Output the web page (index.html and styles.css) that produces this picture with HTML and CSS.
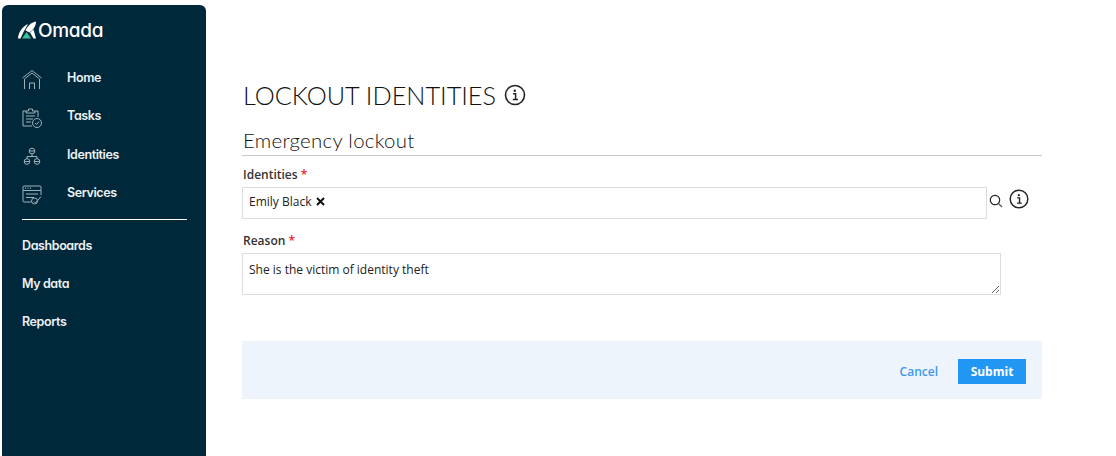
FILE: index.html
```html
<!DOCTYPE html>
<html lang="en">
<head>
    <meta charset="UTF-8">
    <meta name="viewport" content="width=device-width, initial-scale=1.0">
    <title>Lockout identities</title>
    <link rel="stylesheet" href="styles.css">
</head>
<body>
    <nav class="sidebar">
        <div class="logo">
            <svg class="logo-mark" width="20" height="18" viewBox="0 0 20 18">
                <path d="M1 17.5 C1.5 11 5.5 5.5 11 3 L6.5 11 L3.5 17.5 Z" fill="#fff"/>
                <path d="M8.5 9.5 C10.5 5 14 1.5 19 0.5 C19 5 16.5 8.5 12.5 11.5 Z" fill="#fff"/>
                <path d="M5 17.5 L9.5 11 L14 17.5 Z" fill="#3fc1a0"/>
                <path d="M13 11.5 L16.5 8.5 L19 17.5 L16.5 17.5 Z" fill="#fff"/>
            </svg>
            <span>Omada</span>
        </div>
        <ul class="menu">
            <li class="menu-item">
                <svg class="menu-icon" width="20" height="20" viewBox="0 0 20 20" fill="none" stroke="#9fb0ba" stroke-width="1">
                    <path d="M0.5 8 L10 0.5 L19.5 8"/>
                    <path d="M2.5 19 V9 L10 3 L17.5 9 V19"/>
                    <path d="M7.5 19 V13 H12.5 V19"/>
                </svg>
                Home
            </li>
            <li class="menu-item">
                <svg class="menu-icon" width="20" height="20" viewBox="0 0 20 20" fill="none" stroke="#9fb0ba" stroke-width="1">
                    <path d="M4 3 H1 V18 H10"/>
                    <path d="M13 3 H16 V9"/>
                    <path d="M4 5 H13 V3 H10.5 V1 H6.5 V3 H4 Z"/>
                    <path d="M4 8 H13 M4 11 H11 M4 14 H9"/>
                    <circle cx="15" cy="15" r="4.5"/>
                    <path d="M13 15 L14.5 16.5 L17 13.5"/>
                </svg>
                Tasks
            </li>
            <li class="menu-item">
                <svg class="menu-icon" width="20" height="20" viewBox="0 0 20 20" fill="none" stroke="#9fb0ba" stroke-width="1">
                    <circle cx="10" cy="5" r="2.8"/>
                    <circle cx="5" cy="15.5" r="2.8"/>
                    <circle cx="15" cy="15.5" r="2.8"/>
                    <path d="M7.2 5 H12.8 M2.2 15.5 H7.8 M12.2 15.5 H17.8"/>
                    <path d="M10 7.8 V10.5 M5 12.7 V10.5 H15 V12.7"/>
                </svg>
                Identities
            </li>
            <li class="menu-item">
                <svg class="menu-icon" width="20" height="20" viewBox="0 0 20 20" fill="none" stroke="#9fb0ba" stroke-width="1">
                    <path d="M9 17 H2 Q1 17 1 16 V2 Q1 1 2 1 H18 Q19 1 19 2 V10"/>
                    <path d="M1 5.5 H19"/>
                    <path d="M3 3.2 H4 M5.5 3.2 H6.5 M8 3.2 H9" stroke-width="1.2"/>
                    <path d="M4 9 H16 M4 12.5 H12"/>
                    <circle cx="12.5" cy="16" r="3"/>
                    <path d="M12 16.5 L13.5 18 L19 11.5"/>
                </svg>
                Services
            </li>
        </ul>
        <hr class="menu-line">
        <ul class="menu-plain">
            <li>Dashboards</li>
            <li>My data</li>
            <li>Reports</li>
        </ul>
    </nav>

    <main class="content">
        <h1 class="page-title">
            LOCKOUT IDENTITIES
            <svg class="info" width="22" height="22" viewBox="0 0 22 22">
                <circle cx="11" cy="11" r="9.5" fill="none" stroke="#222" stroke-width="1.6"/>
                <circle cx="10.8" cy="6.8" r="1.2" fill="#222"/>
                <path d="M9 9.8 H11.6 V15.2 M8.8 15.6 H14" fill="none" stroke="#222" stroke-width="1.5"/>
            </svg>
        </h1>
        <h2 class="section-title">Emergency lockout</h2>

        <label class="field-label">Identities <span class="req">*</span></label>
        <div class="identity-row">
            <div class="picker">
                <span>Emily Black</span>
                <svg class="remove" width="9" height="9" viewBox="0 0 9 9">
                    <path d="M1 1 L8 8 M8 1 L1 8" stroke="#111" stroke-width="2"/>
                </svg>
            </div>
            <svg class="search" width="14" height="14" viewBox="0 0 14 14" fill="none" stroke="#222">
                <circle cx="6" cy="6" r="4.7" stroke-width="1.2"/>
                <path d="M9.5 9.5 L13 13" stroke="#555" stroke-width="1.2"/>
            </svg>
            <svg class="info-small" width="20" height="20" viewBox="0 0 22 22">
                <circle cx="11" cy="11" r="9.7" fill="none" stroke="#222" stroke-width="1.6"/>
                <circle cx="10.8" cy="6.8" r="1.2" fill="#222"/>
                <path d="M9 9.8 H11.6 V15.2 M8.8 15.6 H14" fill="none" stroke="#222" stroke-width="1.5"/>
            </svg>
        </div>

        <label class="field-label reason-label">Reason <span class="req">*</span></label>
        <textarea class="reason">She is the victim of identity theft</textarea>

        <div class="actions">
            <a class="cancel">Cancel</a>
            <button class="submit">Submit</button>
        </div>
    </main>
</body>
</html>
```

FILE: styles.css
```css
* {
    box-sizing: border-box;
}
body {
    margin: 0;
    height: 456px;
    overflow: hidden;
    display: flex;
    background-color: #fff;
    font-family: "Open Sans", sans-serif;
    color: #222;
}
.sidebar {
    width: 204px;
    height: 451px;
    margin: 5px 0 0 2px;
    padding: 14px 0 0 15px;
    background-color: #00283b;
    border-radius: 6px 6px 0 0;
    color: #eef2f4;
    font-family: Inter, sans-serif;
    font-feature-settings: "cv11";
    font-size: 12.5px;
    font-weight: 600;
    letter-spacing: -0.4px;
    flex-shrink: 0;
}
.logo {
    display: flex;
    align-items: center;
    gap: 1px;
    height: 22px;
    color: #fff;
    font-size: 19px;
    font-weight: 500;
    letter-spacing: -0.3px;
}
.menu {
    list-style: none;
    margin: 17.5px 0 0 5px;
    padding: 0;
}
.menu-item {
    display: flex;
    align-items: center;
    gap: 25px;
    height: 38.3px;
}
.menu-icon {
    margin-top: 4px;
}
.menu-line {
    width: 165px;
    height: 1px;
    margin: 7.5px 0 0 5px;
    border: 0;
    background-color: #fff;
}
.menu-plain {
    list-style: none;
    margin: 6px 0 0 5px;
    padding: 0;
}
.menu-plain li {
    display: flex;
    align-items: center;
    height: 38px;
}
.content {
    width: 800px;
    margin-left: 36px;
    padding-top: 81px;
}
.page-title {
    display: flex;
    align-items: center;
    gap: 8px;
    height: 28px;
    margin: 0 0 0 1px;
    font-family: Lato, sans-serif;
    font-size: 25.3px;
    font-weight: 300;
    color: #111;
}
.section-title {
    height: 30px;
    margin: 17px 0 0;
    padding: 2px 0 0 1px;
    border-bottom: 1px solid #c8c8c8;
    font-family: Lato, sans-serif;
    font-size: 20.4px;
    font-weight: 300;
    letter-spacing: 0.3px;
    color: #111;
}
.field-label {
    display: block;
    margin-top: 10px;
    height: 21px;
    padding-left: 1px;
    font-size: 12px;
    font-weight: 600;
    line-height: 17px;
    color: #333;
}
.req {
    color: #f02020;
}
.identity-row {
    display: flex;
    align-items: center;
}
.picker {
    display: flex;
    align-items: center;
    gap: 5px;
    width: 745px;
    height: 32px;
    padding: 0 0 4px 6px;
    border: 1px solid #ddd;
    font-size: 12px;
}
.search {
    margin: 0 0 4px 2px;
}
.info-small {
    margin: 0 0 8px 6px;
}
.reason-label {
    margin-top: 13px;
    height: 21px;
}
.reason {
    display: block;
    width: 759px;
    height: 42px;
    padding: 7px 6px;
    border: 1px solid #ddd;
    border-radius: 0;
    font-family: "Open Sans", sans-serif;
    font-size: 12px;
    color: #222;
}
.actions {
    display: flex;
    align-items: center;
    justify-content: flex-end;
    gap: 20px;
    height: 58px;
    margin-top: 46px;
    padding: 2px 16px 0 0;
    background-color: #edf4fc;
}
.cancel {
    color: #3f97ee;
    font-size: 12px;
    font-weight: 600;
}
.submit {
    width: 68px;
    height: 25px;
    border: 0;
    background-color: #2196f3;
    color: #fff;
    font-family: "Open Sans", sans-serif;
    font-size: 12px;
    font-weight: 700;
}
```
